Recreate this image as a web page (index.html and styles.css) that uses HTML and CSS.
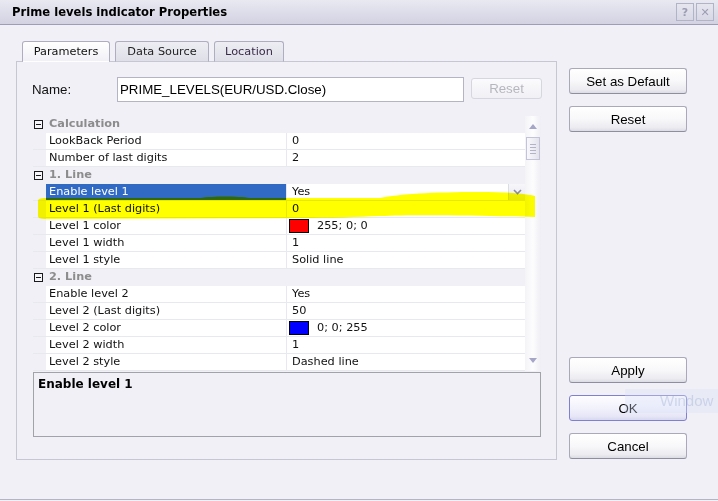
FILE: index.html
```html
<!DOCTYPE html>
<html lang="en">
<head>
  <meta charset="UTF-8" />
  <title>Prime levels indicator Properties</title>
  <link rel="stylesheet" href="styles.css">
</head>
<body>
  <div class="window">
    <div class="titlebar">
      <span class="title">Prime levels indicator Properties</span>
      <div class="caption-buttons">
        <span class="cap-btn">?</span>
        <span class="cap-btn">&#x2715;</span>
      </div>
    </div>

    <div class="content">
      <div class="main">
        <div class="tabs">
          <div class="tab active tab-params">Parameters</div>
          <div class="tab tab-source">Data Source</div>
          <div class="tab tab-location">Location</div>
        </div>

        <div class="panel">
          <div class="name-row">
            <label for="nameInput">Name:</label>
            <input type="text" id="nameInput" class="name-input" value="PRIME_LEVELS(EUR/USD.Close)" />
            <button class="btn reset-small" disabled>Reset</button>
          </div>

          <div class="grid">
            <div class="rows" id="propRows"></div>
            <div class="scrollbar">
              <div class="scroll-arrow">
                <svg width="8" height="5" viewBox="0 0 8 5"><polygon points="0,5 4,0 8,5" fill="#a6a6c6"/></svg>
              </div>
              <div class="thumb"><span></span><span></span><span></span><span></span></div>
              <div class="scroll-track"></div>
              <div class="scroll-arrow">
                <svg width="8" height="5" viewBox="0 0 8 5"><polygon points="0,0 4,5 8,0" fill="#a6a6c6"/></svg>
              </div>
            </div>
          </div>

          <div class="description">Enable level 1</div>
        </div>
      </div>

      <div class="side">
        <button class="btn">Set as Default</button>
        <button class="btn">Reset</button>
        <button class="btn apply">Apply</button>
        <button class="btn default">OK</button>
        <button class="btn">Cancel</button>
      </div>
    </div>

    <!-- marker stroke drawn over the grid row -->
    <svg class="marker" width="718" height="501" viewBox="0 0 718 501">
      <path d="M38,201 C38,199 40,198 46,198 L200,198 C212,196 238,196 250,198 L380,198
               C400,194 430,192 480,192 C510,192 528,194 535,196 L535,217
               C500,216 420,214 380,216 C360,217 330,218 300,218 L46,219
               C40,219 38,218 38,216 Z" fill="#ffff00"/>
    </svg>

    <div class="ghost">Window</div>
  </div>

  <script>
    const groups = [
      { title: "Calculation", items: [
        { name: "LookBack Period", value: "0" },
        { name: "Number of last digits", value: "2" }
      ]},
      { title: "1. Line", items: [
        { name: "Enable level 1", value: "Yes", selected: true },
        { name: "Level 1 (Last digits)", value: "0" },
        { name: "Level 1 color", value: "255; 0; 0", color: "#ff0000" },
        { name: "Level 1 width", value: "1" },
        { name: "Level 1 style", value: "Solid line" }
      ]},
      { title: "2. Line", items: [
        { name: "Enable level 2", value: "Yes" },
        { name: "Level 2 (Last digits)", value: "50" },
        { name: "Level 2 color", value: "0; 0; 255", color: "#0000ff" },
        { name: "Level 2 width", value: "1" },
        { name: "Level 2 style", value: "Dashed line" }
      ]}
    ];

    function renderRows() {
      const container = document.getElementById("propRows");
      let html = "";

      groups.forEach((group) => {
        html += `
          <div class="row category">
            <div class="gutter"><span class="toggle"></span></div>
            <div class="cat-label">${group.title}</div>
          </div>`;

        group.items.forEach((item) => {
          const swatch = item.color
            ? `<span class="swatch" style="background:${item.color}"></span>`
            : "";
          const drop = item.selected
            ? `<span class="dropdown"><svg width="9" height="6" viewBox="0 0 9 6"><polyline points="1,1 4.5,4.5 8,1" fill="none" stroke="#8a8aa8" stroke-width="1.6"/></svg></span>`
            : "";
          html += `
            <div class="row${item.selected ? " selected" : ""}">
              <div class="gutter"></div>
              <div class="cell-name">${item.name}</div>
              <div class="cell-value${item.color ? " has-swatch" : ""}">${swatch}<span>${item.value}</span>${drop}</div>
            </div>`;
        });
      });

      container.innerHTML = html;
    }

    renderRows();
  </script>
</body>
</html>
```

FILE: styles.css
```css
* {
  box-sizing: border-box;
}

body {
  margin: 0;
  background-color: #f1f0f6;
  font-family: "DejaVu Sans", sans-serif;
  color: #111;
}

.window {
  position: relative;
  width: 718px;
  height: 500px;
  display: flex;
  flex-direction: column;
  background-color: #f1f0f6;
  border-bottom: 1px solid #b4b4c4;
  overflow: hidden;
}

/* title bar */
.titlebar {
  height: 25px;
  flex-shrink: 0;
  display: flex;
  align-items: center;
  justify-content: space-between;
  padding: 0 4px 0 12px;
  background: linear-gradient(#e9e9f2, #d2d2e2);
  border-bottom: 1px solid #9d9db8;
}

.title {
  font-size: 11.6px;
  font-weight: bold;
  color: #000;
}

.caption-buttons {
  display: flex;
  gap: 2px;
}

.cap-btn {
  width: 18px;
  height: 18px;
  display: flex;
  align-items: center;
  justify-content: center;
  border: 1px solid #b2b2c8;
  background: linear-gradient(#e6e6ef, #d8d8e6);
  color: #9c9cb4;
  font-size: 11px;
  font-weight: bold;
}

/* main area */
.content {
  display: flex;
  align-items: flex-start;
  padding: 16px 0 0 16px;
}

.main {
  width: 541px;
}

.tabs {
  position: relative;
  z-index: 1;
  display: flex;
  gap: 5px;
  padding-left: 6px;
  margin-bottom: -1px;
}

.tab {
  height: 21px;
  display: flex;
  align-items: center;
  justify-content: center;
  border: 1px solid #aeaec0;
  border-bottom-color: #c7c7d3;
  border-radius: 3px 3px 0 0;
  background: linear-gradient(#ededf3, #dfdfe8);
  font-size: 11.3px;
  color: #222;
}

.tab.active {
  background: linear-gradient(#ffffff, #f1f0f6);
  border-bottom-color: transparent;
  color: #111;
}

.tab-params { width: 88px; }
.tab-source { width: 94px; }
.tab-location { width: 70px; color: #3a2a48; }

.panel {
  height: 399px;
  border: 1px solid #c7c7d3;
  padding: 15px 0 0 15px;
}

.name-row {
  display: flex;
  align-items: flex-start;
}

.name-row label {
  width: 85px;
  font-family: "Liberation Sans", Arial, sans-serif;
  font-size: 13.3px;
  line-height: 25px;
  color: #111;
}

.name-input {
  width: 347px;
  height: 25px;
  margin: 0;
  padding: 0 2px;
  border: 1px solid #b4b4c2;
  background: #fff;
  font-family: "Liberation Sans", Arial, sans-serif;
  font-size: 13.3px;
  color: #000;
}

/* buttons */
.btn {
  height: 26px;
  margin: 0;
  padding: 0;
  border: 1px solid #a9a9b9;
  border-bottom-color: #8e8ea0;
  border-radius: 3px;
  background: linear-gradient(#ffffff 0%, #f8f8fa 50%, #ececf1 85%, #dcdce4 100%);
  font-family: "Liberation Sans", Arial, sans-serif;
  font-size: 13.3px;
  color: #000;
}

.btn.default {
  border-color: #8080d2;
  background: linear-gradient(#fdfdff 0%, #f2f2fc 50%, #e6e6f7 85%, #d8d8f0 100%);
}

.btn:disabled {
  border-color: #d6d6e0;
  background: linear-gradient(#fbfbfd, #f0f0f5);
  color: #b6b6be;
}

.reset-small {
  width: 71px;
  height: 21px;
  margin: 1px 0 0 7px;
}

.side {
  width: 118px;
  height: 418px;
  margin-left: 12px;
  padding-top: 27px;
  display: flex;
  flex-direction: column;
  gap: 12px;
}

.side .apply {
  margin-top: auto;
}

/* property grid */
.grid {
  display: flex;
  width: 508px;
  height: 255px;
  margin: 14px 0 0 1px;
}

.rows {
  width: 492px;
}

.row {
  display: flex;
  height: 17px;
  border-bottom: 1px solid #e8e8ef;
  font-size: 11.3px;
  line-height: 16px;
  white-space: nowrap;
}

.gutter {
  width: 13px;
  flex-shrink: 0;
  display: flex;
  align-items: center;
  padding-left: 1px;
  background: #f1f0f6;
}

.toggle {
  position: relative;
  width: 9px;
  height: 9px;
  border: 1px solid #1a1a1a;
  background: #f6f6fa;
}

.toggle::after {
  content: "";
  position: absolute;
  left: 1px;
  top: 3px;
  width: 5px;
  height: 1px;
  background: #1a1a1a;
}

.row.category {
  background: #f1f0f6;
  border-bottom-color: #f1f0f6;
}

.cat-label {
  padding-left: 3px;
  font-weight: bold;
  color: #8c8c8c;
}

.cell-name {
  width: 241px;
  padding-left: 3px;
  background: #fff;
  border-right: 1px solid #e8e8ef;
  color: #111;
}

.cell-value {
  width: 238px;
  display: flex;
  align-items: center;
  padding-left: 5px;
  background: #fff;
  color: #111;
}

.cell-value.has-swatch {
  padding-left: 2px;
}

.swatch {
  width: 20px;
  height: 14px;
  margin-right: 8px;
  border: 1px solid #000;
}

.row.selected .cell-name {
  background: #316ac5;
  color: #fff;
}

.dropdown {
  width: 17px;
  height: 16px;
  margin-left: auto;
  display: flex;
  align-items: center;
  justify-content: center;
  background: linear-gradient(#f7f7fa, #e8e8ef);
  border-left: 1px solid #dcdce6;
}

.scrollbar {
  width: 16px;
  height: 255px;
  display: flex;
  flex-direction: column;
  background: linear-gradient(90deg, #f4f4f8, #fdfdfe 50%, #eeeef4);
}

.scroll-arrow {
  height: 21px;
  display: flex;
  align-items: center;
  justify-content: center;
}

.thumb {
  width: 14px;
  height: 23px;
  margin-left: 1px;
  display: flex;
  flex-direction: column;
  justify-content: center;
  gap: 2px;
  padding: 0 3px;
  border: 1px solid #c2c2d8;
  background: linear-gradient(90deg, #f8f8fc, #ececf3 60%, #e2e2ec);
}

.thumb span {
  height: 1px;
  background: #b2b2c8;
}

.scroll-track {
  flex: 1;
}

.description {
  width: 508px;
  height: 65px;
  margin: 1px 0 0 1px;
  padding: 4px 4px;
  border: 1px solid #a2a2aa;
  font-size: 12px;
  font-weight: bold;
  color: #000;
}

/* overlays */
.marker {
  position: absolute;
  left: 0;
  top: 0;
  pointer-events: none;
  mix-blend-mode: multiply;
}

.ghost {
  position: absolute;
  left: 625px;
  top: 389px;
  width: 93px;
  height: 24px;
  padding-left: 35px;
  background: rgba(214, 224, 246, 0.35);
  color: rgba(160, 176, 212, 0.4);
  font-family: "Liberation Sans", Arial, sans-serif;
  font-size: 15px;
  line-height: 24px;
  white-space: nowrap;
  pointer-events: none;
}
```
